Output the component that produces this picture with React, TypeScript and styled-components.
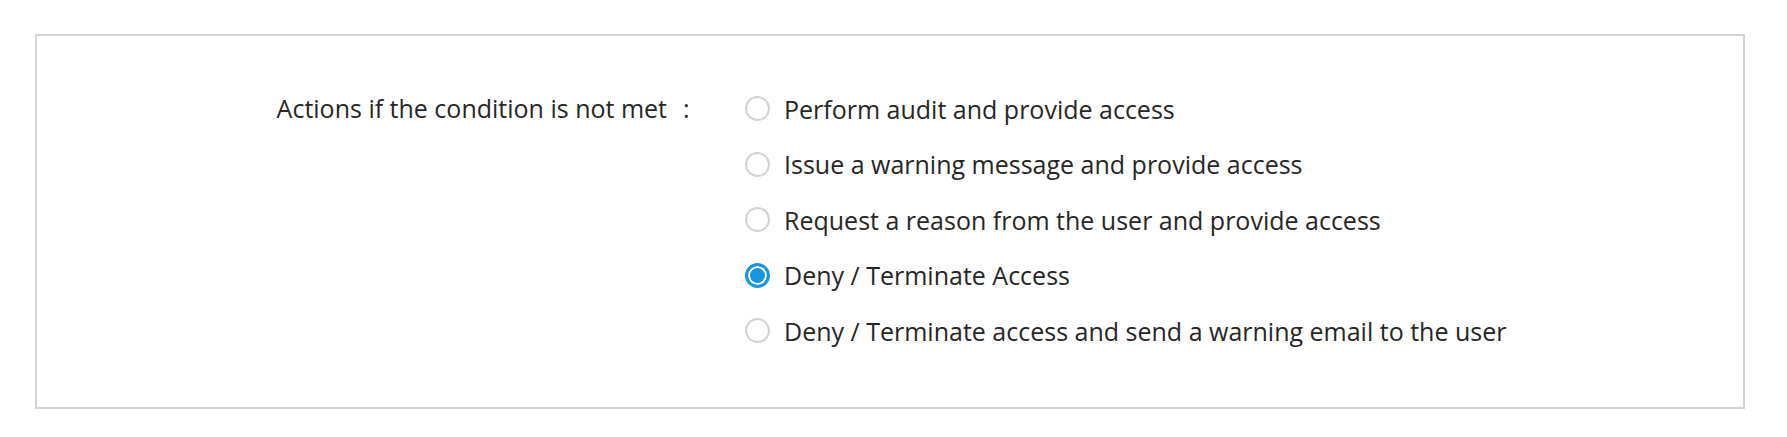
import styled, { createGlobalStyle } from "styled-components";
import { useState } from "react";

const GlobalStyle = createGlobalStyle`
  body {
    margin: 0;
    background: #ffffff;
    font-family: "Open Sans", "Noto Sans", sans-serif;
  }
`;

const options = [
  "Perform audit and provide access",
  "Issue a warning message and provide access",
  "Request a reason from the user and provide access",
  "Deny / Terminate Access",
  "Deny / Terminate access and send a warning email to the user",
];

function App() {
  const [selected, setSelected] = useState(3);
  return (
    <Page>
      <GlobalStyle />
      <Panel>
        <FieldRow>
          <Label>Actions if the condition is not met</Label>
          <Colon>:</Colon>
          <OptionList>
            {options.map((text, i) => (
              <Option key={text} onClick={() => setSelected(i)}>
                <Radio checked={selected === i} />
                <OptionText>{text}</OptionText>
              </Option>
            ))}
          </OptionList>
        </FieldRow>
      </Panel>
    </Page>
  );
}

const Page = styled.div`
  padding: 34px 0 0 35px;
`;

const Panel = styled.div`
  box-sizing: border-box;
  width: 1710px;
  height: 375px;
  border: 2px solid #d4d4d4;
  padding-top: 45px;
`;

const FieldRow = styled.div`
  display: flex;
  align-items: flex-start;
`;

const Label = styled.div`
  width: 630px;
  text-align: right;
  font-size: 25px;
  line-height: 55px;
  color: #262626;
`;

const Colon = styled.div`
  width: 62px;
  padding-left: 16px;
  font-size: 25px;
  line-height: 55px;
  color: #262626;
`;

const OptionList = styled.div`
  display: flex;
  flex-direction: column;
`;

const Option = styled.label`
  display: flex;
  align-items: center;
  gap: 14px;
  height: 55.5px;
  cursor: pointer;
`;

const Radio = styled.span<{ checked: boolean }>`
  box-sizing: border-box;
  width: 25px;
  height: 25px;
  border-radius: 50%;
  border: ${(p) => (p.checked ? "3px solid #1a96e0" : "2px solid #d2d2d2")};
  background: ${(p) => (p.checked ? "#1a96e0" : "#ffffff")};
  box-shadow: ${(p) => (p.checked ? "inset 0 0 0 2px #ffffff" : "none")};
`;

const OptionText = styled.span`
  font-size: 25px;
  color: #262626;
`;

export default App;
